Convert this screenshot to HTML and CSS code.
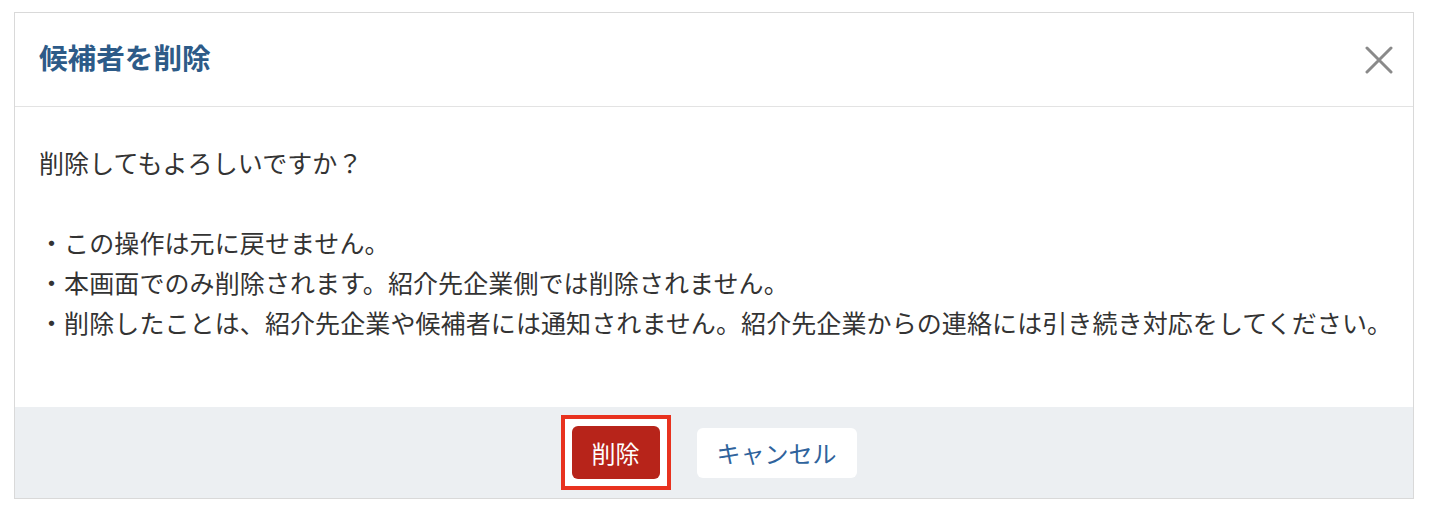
FILE: index.html
```html
<!DOCTYPE html>
<html lang="ja">
<head>
  <meta charset="UTF-8">
  <meta name="viewport" content="width=device-width, initial-scale=1.0">
  <title>候補者を削除</title>
  <link rel="stylesheet" href="styles.css">
</head>
<body>
  <div class="dialog">
    <div class="dialog-header">
      <h2 class="dialog-title">候補者を削除</h2>
      <button class="close-btn" aria-label="閉じる">
        <svg width="28" height="28" viewBox="0 0 28 28">
          <path d="M2 2 L26 26 M26 2 L2 26" stroke="#8a8a8a" stroke-width="3" stroke-linecap="round" fill="none"/>
        </svg>
      </button>
    </div>

    <div class="dialog-body">
      <p>削除してもよろしいですか？</p>
      <p>&nbsp;</p>
      <p>・この操作は元に戻せません。</p>
      <p>・本画面でのみ削除されます。紹介先企業側では削除されません。</p>
      <p>・削除したことは、紹介先企業や候補者には通知されません。紹介先企業からの連絡には引き続き対応をしてください。</p>
    </div>

    <div class="dialog-footer">
      <span class="highlight">
        <button class="btn btn-danger">削除</button>
      </span>
      <button class="btn btn-cancel">キャンセル</button>
    </div>
  </div>
</body>
</html>
```

FILE: styles.css
```css
/* General Styles */
body {
  font-family: "Noto Sans CJK JP", "Noto Sans", sans-serif;
  background-color: #ffffff;
  color: #333333;
  margin: 0;
  padding: 12px 16px 0 14px;
}

.dialog {
  border: 1px solid #d9d9d9;
  background-color: #ffffff;
}

.dialog-header {
  display: flex;
  align-items: center;
  justify-content: space-between;
  height: 93px;
  padding: 0 20px 0 24px;
  border-bottom: 1px solid #e3e3e3;
}

.dialog-title {
  margin: 0 0 6px 0;
  font-size: 28.6px;
  font-weight: bold;
  color: #2d5b88;
}

.close-btn {
  background: none;
  border: none;
  padding: 0;
  width: 28px;
  height: 28px;
  cursor: pointer;
}

.dialog-body {
  padding: 35px 24px 65px 24px;
  font-size: 25px;
  line-height: 40px;
  letter-spacing: 0.1px;
}

.dialog-body p {
  margin: 0;
  white-space: nowrap;
}

.dialog-footer {
  display: flex;
  justify-content: center;
  align-items: center;
  gap: 37px;
  height: 91px;
  background-color: #eceff2;
}

.highlight {
  display: inline-flex;
  margin: -11px;
  padding: 7px;
  border: 4px solid #e8321f;
  background-color: #ffffff;
}

.btn {
  font-family: inherit;
  font-size: 24px;
  border: none;
  border-radius: 6px;
  cursor: pointer;
  padding: 0 20px;
}

.btn-danger {
  height: 53px;
  background-color: #b7241a;
  color: #ffffff;
}

.btn-cancel {
  height: 50px;
  background-color: #ffffff;
  color: #2f639c;
}
```
